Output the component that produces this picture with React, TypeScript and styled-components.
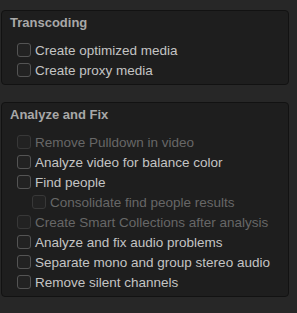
import styled, { createGlobalStyle } from "styled-components";

const Global = createGlobalStyle`
    body {
        margin: 0;
        background: #272727;
        font-family: "Liberation Sans", Arial, sans-serif;
    }
`;

const Page = styled.div`
    display: flex;
    flex-direction: column;
    gap: 17px;
    padding: 10px 0 0 1px;
    width: 288px;
`;

const Panel = styled.section`
    background: #1e1e1e;
    border: 1px solid #121212;
    border-radius: 4px;
    padding: 4px 0 4px 8px;
`;

const Title = styled.h3`
    margin: 0 0 9px 0;
    font-size: 13px;
    line-height: 16px;
    font-weight: bold;
    color: #a8a8a8;
`;

const Row = styled.label<{ $indent?: boolean; $disabled?: boolean }>`
    display: flex;
    align-items: center;
    gap: 4px;
    height: 20px;
    padding-left: ${(p) => (p.$indent ? "22px" : "7px")};
    font-size: 13.5px;
    color: ${(p) => (p.$disabled ? "#676767" : "#c4c4c4")};
`;

const Box = styled.span<{ $disabled?: boolean }>`
    width: 12px;
    height: 12px;
    border: 1px solid ${(p) => (p.$disabled ? "#383838" : "#545454")};
    border-radius: 3px;
    background: #222222;
`;

type Item = { text: string; indent?: boolean; disabled?: boolean };

const transcoding: Item[] = [
    { text: "Create optimized media" },
    { text: "Create proxy media" },
];

const analyze: Item[] = [
    { text: "Remove Pulldown in video", disabled: true },
    { text: "Analyze video for balance color" },
    { text: "Find people" },
    { text: "Consolidate find people results", indent: true, disabled: true },
    { text: "Create Smart Collections after analysis", disabled: true },
    { text: "Analyze and fix audio problems" },
    { text: "Separate mono and group stereo audio" },
    { text: "Remove silent channels" },
];

function Option({ item }: { item: Item }) {
    return (
        <Row $indent={item.indent} $disabled={item.disabled}>
            <Box $disabled={item.disabled} />
            {item.text}
        </Row>
    );
}

function App() {
    return (
        <>
            <Global />
            <Page>
                <Panel>
                    <Title>Transcoding</Title>
                    {transcoding.map((it) => (
                        <Option key={it.text} item={it} />
                    ))}
                </Panel>
                <Panel>
                    <Title>Analyze and Fix</Title>
                    {analyze.map((it) => (
                        <Option key={it.text} item={it} />
                    ))}
                </Panel>
            </Page>
        </>
    );
}

export default App;
